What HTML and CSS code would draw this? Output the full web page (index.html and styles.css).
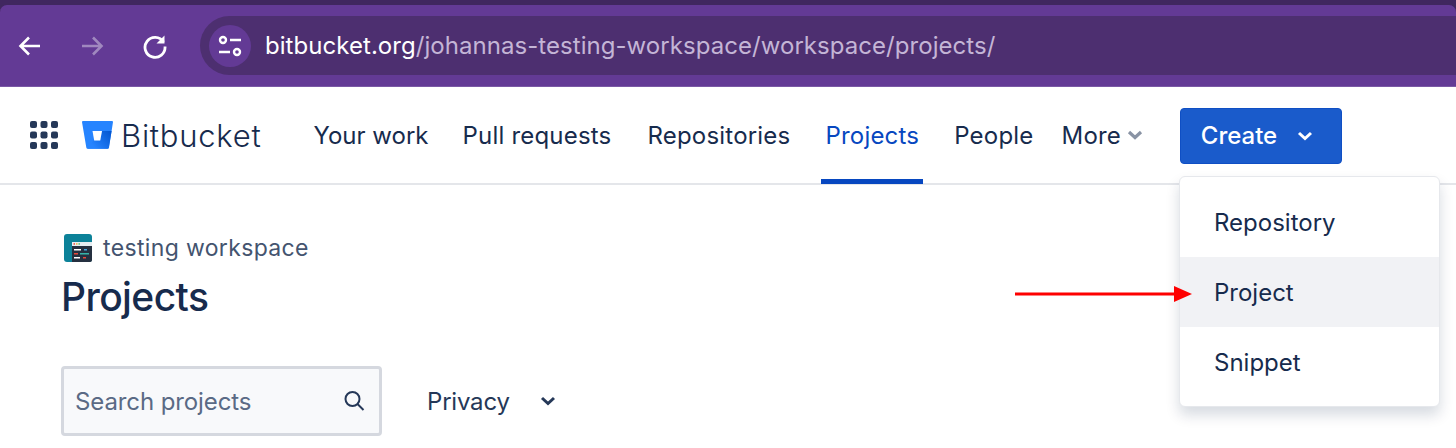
FILE: index.html
```html
<!DOCTYPE html>
<html lang="en">
  <head>
    <meta charset="UTF-8" />
    <meta name="viewport" content="width=device-width, initial-scale=1.0" />
    <title>Projects</title>
    <link rel="stylesheet" href="styles.css">
  </head>
  <body>
    <div class="browser-frame">
      <div class="browser-bar">
        <div class="browser-btns">
          <svg class="browser-btn" width="26" height="26" viewBox="0 0 26 26" fill="none" stroke="#fff" stroke-width="2.6"><path d="M23 13H4M12 4.500 3.500 13l8.500 8.500"/></svg>
          <svg class="browser-btn" width="26" height="26" viewBox="0 0 26 26" fill="none" stroke="#a088bf" stroke-width="2.6"><path d="M3 13h19M14 4.500l8.500 8.500-8.500 8.500"/></svg>
          <svg class="browser-btn reload" width="26" height="26" viewBox="0 0 26 26" fill="none" stroke="#fff" stroke-width="2.800"><path d="M21.500 9A10 10 0 1 0 23 13.500"/><path d="M22.500 2.500v8h-8" fill="#fff" stroke="none"/></svg>
        </div>
        <div class="url-bar">
          <span class="url-icon">
            <svg width="26" height="22" viewBox="0 0 26 22" fill="none" stroke="#fff" stroke-width="2.400"><circle cx="6" cy="5" r="3"/><path d="M13 5h11M2 17h11"/><circle cx="20" cy="17" r="3"/></svg>
          </span>
          <span class="url-text"><b>bitbucket.org</b>/johannas-testing-workspace/workspace/projects/</span>
        </div>
      </div>
    </div>

    <nav class="topnav">
      <svg class="apps" width="28" height="28" viewBox="0 0 28 28" fill="#253858">
        <rect x="0" y="0" width="7" height="7" rx="2"/><rect x="10.500" y="0" width="7" height="7" rx="2"/><rect x="21" y="0" width="7" height="7" rx="2"/>
        <rect x="0" y="10.500" width="7" height="7" rx="2"/><rect x="10.500" y="10.500" width="7" height="7" rx="2"/><rect x="21" y="10.500" width="7" height="7" rx="2"/>
        <rect x="0" y="21" width="7" height="7" rx="2"/><rect x="10.500" y="21" width="7" height="7" rx="2"/><rect x="21" y="21" width="7" height="7" rx="2"/>
      </svg>
      <svg class="logo" width="31" height="28" viewBox="0 0 31 28">
        <defs>
          <linearGradient id="bucket-shade" x1="31" y1="10" x2="12" y2="26" gradientUnits="userSpaceOnUse">
            <stop offset="0" stop-color="#0052cc"/>
            <stop offset="1" stop-color="#2684ff"/>
          </linearGradient>
        </defs>
        <path d="M1 0h29a1 1 0 0 1 1 1l-4 25.500a1.500 1.500 0 0 1-1.500 1.300H5.800a1.500 1.500 0 0 1-1.500-1.300L0 1a1 1 0 0 1 1-1z" fill="#2684ff"/>
        <path d="M29.600 10H20l-1.800 9.500H11.500L5 26.800c.3.600.8 1 1.500 1h18.800a1.500 1.500 0 0 0 1.500-1.300z" fill="url(#bucket-shade)"/>
        <path d="M10.500 10H20l-1.800 9.500h-6z" fill="#fff"/>
      </svg>
      <span class="brand">Bitbucket</span>
      <div class="nav-links">
        <a class="nav-link link-work">Your work</a>
        <a class="nav-link link-pulls">Pull requests</a>
        <a class="nav-link link-repos">Repositories</a>
        <a class="nav-link link-projects active">Projects</a>
        <a class="nav-link link-people">People</a>
        <a class="nav-link link-more">More
          <svg width="16" height="10" viewBox="0 0 16 10" fill="none" stroke="#8993a4" stroke-width="3.200"><path d="M2 2l6 5.500L14 2"/></svg>
        </a>
      </div>
      <button type="button" class="create-btn">Create
        <svg width="16" height="10" viewBox="0 0 16 10" fill="none" stroke="#fff" stroke-width="3"><path d="M2 2l6 5.500L14 2"/></svg>
      </button>
    </nav>

    <main class="content">
      <div class="workspace">
        <svg width="28" height="28" viewBox="0 0 28 28">
          <rect width="28" height="28" rx="3" fill="#0c8299"/>
          <path d="M8 9h20v17a2 2 0 0 1-2 2H8z" fill="#253040"/>
          <rect x="8" y="8" width="20" height="4" fill="#e6edf2"/>
          <rect x="9.500" y="9.200" width="1.500" height="1.500" fill="#e5493a"/><rect x="12" y="9.200" width="1.500" height="1.500" fill="#f2b63c"/><rect x="14.500" y="9.200" width="1.500" height="1.500" fill="#5cc47a"/>
          <rect x="10" y="15" width="7" height="1.500" fill="#fff"/><rect x="20" y="15" width="3" height="1.500" fill="#4aa8e0"/>
          <rect x="10" y="19" width="4" height="1.500" fill="#e5493a"/><rect x="16" y="19" width="9" height="1.500" fill="#36b3a8"/>
          <rect x="10" y="23" width="6" height="1.500" fill="#fff"/><rect x="19" y="23" width="3" height="1.500" fill="#e5493a"/>
        </svg>
        <span>testing workspace</span>
      </div>
      <h1>Projects</h1>
      <div class="filters">
        <div class="search">
          <span>Search projects</span>
          <svg width="22" height="22" viewBox="0 0 22 22" fill="none" stroke="#253858" stroke-width="2"><circle cx="9.500" cy="9" r="7"/><path d="M14.500 14l6 6"/></svg>
        </div>
        <div class="privacy">Privacy
          <svg width="16" height="10" viewBox="0 0 16 10" fill="none" stroke="#253858" stroke-width="3"><path d="M2 2l6 5.500L14 2"/></svg>
        </div>
      </div>
    </main>

    <div class="create-menu">
      <div class="menu-item">Repository</div>
      <div class="menu-item hover">Project</div>
      <div class="menu-item">Snippet</div>
    </div>

    <svg class="arrow" width="177" height="20" viewBox="0 0 177 20" fill="#fe0000"><rect x="0" y="8.500" width="162" height="3"/><path d="M159 2l18 8-18 8z"/></svg>
  </body>
</html>
```
FILE: styles.css
```css
html,
body {
  margin: 0;
  height: 448px;
  overflow: hidden;
  background: #fff;
}
body {
  font-family: Inter, "Liberation Sans", sans-serif;
  color: #172b4d;
  position: relative;
}
.browser-frame {
  padding-top: 5px;
  background: #40275f;
}
.browser-bar {
  height: 71px;
  padding-top: 11px;
  background: #633a95;
  border-radius: 7px 7px 0 0;
  box-shadow: inset 0 -1px 0 #7a59a5;
  display: flex;
  align-items: flex-start;
}
.browser-btns {
  width: 200px;
  height: 59px;
  display: flex;
  align-items: center;
  flex-shrink: 0;
  padding-left: 17px;
  box-sizing: border-box;
  gap: 36px;
}
.reload {
  margin-left: 1px;
}
.url-bar {
  flex: 1;
  height: 59px;
  background: #4d2f70;
  border-radius: 30px 0 0 30px;
  display: flex;
  align-items: center;
  padding-left: 9px;
}
.url-icon {
  width: 42px;
  height: 42px;
  border-radius: 50%;
  background: #633a95;
  display: flex;
  align-items: center;
  justify-content: center;
}
.url-text {
  margin-left: 14px;
  font-size: 24px;
  letter-spacing: 0.05px;
  color: #c4b5d6;
}
.url-text b {
  font-weight: 400;
  color: #fff;
}
.topnav {
  height: 96px;
  border-bottom: 2px solid #e4e6ea;
  display: flex;
  align-items: center;
  padding-left: 30px;
}
.logo {
  margin-left: 24px;
}
.brand {
  margin-left: 8px;
  font-size: 31px;
  font-weight: 350;
  color: #172b4d;
  letter-spacing: 0.75px;
}
.nav-links {
  display: flex;
  height: 100%;
  margin-left: 48px;
}
.nav-link {
  display: flex;
  align-items: center;
  gap: 6px;
  font-size: 24px;
  letter-spacing: 0.2px;
  padding: 0 4px;
  position: relative;
  color: #172b4d;
}
.link-work { margin-right: 26px; letter-spacing: 0; }
.link-pulls { margin-right: 28px; }
.link-repos { margin-right: 27px; }
.link-projects { margin-right: 27px; }
.link-people { margin-right: 20px; }
.active {
  color: #0747c0;
}
.active::after {
  content: "";
  position: absolute;
  left: 0;
  right: 0;
  bottom: -1px;
  height: 5px;
  background: #0747c0;
}
.create-btn {
  margin-left: 33px;
  margin-top: 1px;
  width: 162px;
  height: 56px;
  padding: 0 8px 0 0;
  background: #1a5bcb;
  border: 1px solid #0f4fc4;
  border-radius: 4px;
  color: #fff;
  font: 500 24px Inter, "Liberation Sans", sans-serif;
  display: flex;
  align-items: center;
  justify-content: center;
  gap: 20px;
  cursor: pointer;
}
.content {
  padding: 49px 0 0 61px;
}
.workspace {
  display: flex;
  align-items: center;
  gap: 11px;
  margin-left: 3px;
  font-size: 23px;
  letter-spacing: 0.35px;
  color: #44546f;
}
h1 {
  margin: 11px 0 0;
  font-size: 39px;
  line-height: 48px;
  font-weight: 500;
  color: #172b4d;
  letter-spacing: -0.6px;
}
.filters {
  display: flex;
  align-items: center;
  margin-top: 45px;
}
.search {
  width: 321px;
  height: 70px;
  box-sizing: border-box;
  background: #f8f9fb;
  border: 3px solid #d5d8df;
  border-radius: 4px;
  display: flex;
  align-items: center;
  justify-content: space-between;
  padding: 0 14px 0 11px;
  font-size: 24px;
  letter-spacing: -0.1px;
  color: #5a6a85;
}
.privacy {
  margin-left: 45px;
  display: flex;
  align-items: center;
  gap: 30px;
  font-size: 24px;
  letter-spacing: -0.2px;
  color: #253858;
}
.create-menu {
  position: absolute;
  left: 1179px;
  top: 176px;
  width: 261px;
  height: 231px;
  padding: 10px 0;
  box-sizing: border-box;
  background: #fff;
  border: 1px solid #e6e8ec;
  border-radius: 6px;
  box-shadow: 0 8px 14px rgba(9, 30, 66, 0.16);
}
.menu-item {
  height: 70px;
  padding-left: 34px;
  display: flex;
  align-items: center;
  font-size: 24px;
  color: #172b4d;
}
.hover {
  background: #f1f2f5;
}
.arrow {
  position: absolute;
  left: 1015px;
  top: 284px;
}
```
